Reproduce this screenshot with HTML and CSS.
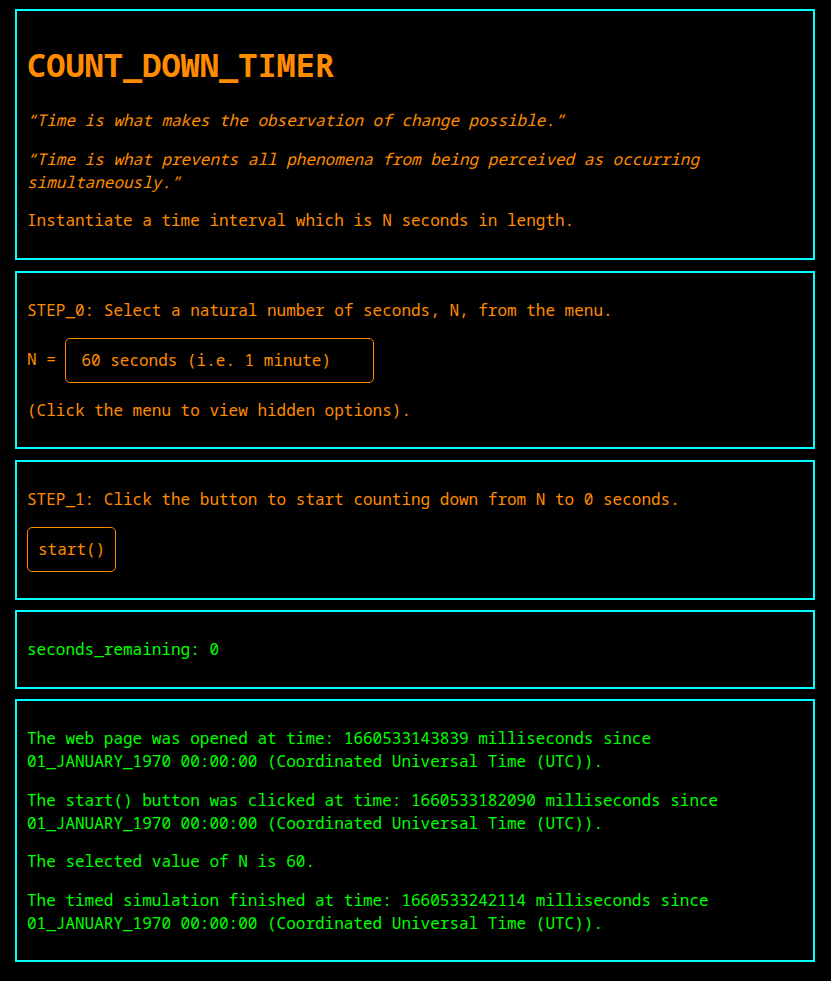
FILE: index.html
```html
<!DOCTYPE html>
<html lang="en">
<head>
<meta charset="utf-8">
<title>COUNT_DOWN_TIMER</title>
<link rel="stylesheet" href="styles.css">
</head>
<body>
<div class="page">
  <div class="box">
    <h1 class="title">COUNT_DOWN_TIMER</h1>
    <p class="quote">“Time is what makes the observation of change possible.”</p>
    <p class="quote">“Time is what prevents all phenomena from being perceived as occurring simultaneously.”</p>
    <p class="orange">Instantiate a time interval which is N seconds in length.</p>
  </div>
  <div class="box">
    <p class="orange">STEP_0: Select a natural number of seconds, N, from the menu.</p>
    <p class="orange select-row">N = <select class="menu"><option>60 seconds (i.e. 1 minute)</option></select></p>
    <p class="orange">(Click the menu to view hidden options).</p>
  </div>
  <div class="box">
    <p class="orange">STEP_1: Click the button to start counting down from N to 0 seconds.</p>
    <p class="btn-row"><button class="btn">start()</button></p>
  </div>
  <div class="box">
    <p class="green">seconds_remaining: 0</p>
  </div>
  <div class="box">
    <p class="green">The web page was opened at time: 1660533143839 milliseconds since 01_JANUARY_1970 00:00:00 (Coordinated Universal Time (UTC)).</p>
    <p class="green">The start() button was clicked at time: 1660533182090 milliseconds since 01_JANUARY_1970 00:00:00 (Coordinated Universal Time (UTC)).</p>
    <p class="green">The selected value of N is 60.</p>
    <p class="green">The timed simulation finished at time: 1660533242114 milliseconds since 01_JANUARY_1970 00:00:00 (Coordinated Universal Time (UTC)).</p>
  </div>
</div>
</body>
</html>
```

FILE: styles.css
```css
html, body {
  background: #000000;
}
body {
  margin: 0;
  font-family: "Noto Sans Mono", "DejaVu Sans Mono", monospace;
  font-size: 16px;
  line-height: 1.42;
}
.page {
  width: 800px;
  padding: 9px 0 0 15px;
  display: flex;
  flex-direction: column;
  gap: 10.6px;
}
.box {
  border: 2px solid #00ffff;
  padding: 10px;
}
.title {
  font-size: 32px;
  font-weight: bold;
  color: #ff8c00;
  margin: 0.67em 0;
}
.quote {
  font-style: italic;
  color: #ff8c00;
}
.orange {
  color: #ff8c00;
}
.green {
  color: #00ff00;
}
p {
  margin: 16px 0;
}
.menu {
  appearance: none;
  -webkit-appearance: none;
  background: #000000;
  color: #ff8c00;
  border: 1px solid #ff8c00;
  border-radius: 5px;
  font-family: "Noto Sans Mono", "DejaVu Sans Mono", monospace;
  font-size: 16px;
  line-height: 23px;
  height: 45px;
  width: 309px;
  padding: 10px 15px;
  vertical-align: middle;
}
.btn-row {
  display: flex;
}
.btn {
  background: #000000;
  color: #ff8c00;
  border: 1px solid #ff8c00;
  border-radius: 5px;
  font-family: "Noto Sans Mono", "DejaVu Sans Mono", monospace;
  font-size: 16px;
  line-height: 23px;
  padding: 10px;
  cursor: pointer;
}
```
